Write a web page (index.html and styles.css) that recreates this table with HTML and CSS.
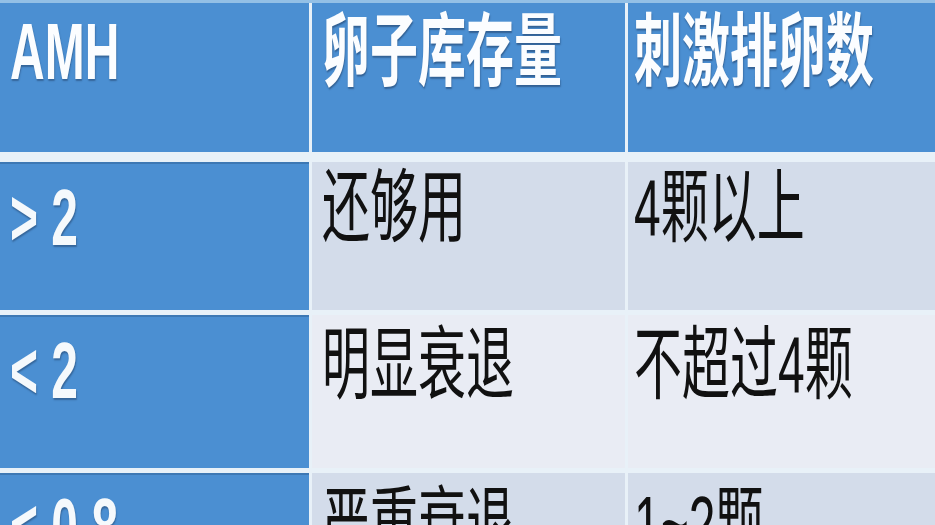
FILE: index.html
```html
<!DOCTYPE html>
<html lang="zh-CN">
<head>
<meta charset="utf-8">
<title>AMH 卵子库存量</title>
<link rel="stylesheet" href="styles.css">
</head>
<body>
<div class="table">
  <div class="row head">
    <div class="cell key"><span class="txt">AMH</span></div>
    <div class="cell"><span class="txt">卵子库存量</span></div>
    <div class="cell"><span class="txt">刺激排卵数</span></div>
  </div>
  <div class="row r1 dark">
    <div class="cell key"><span class="txt">&gt; 2</span></div>
    <div class="cell"><span class="txt">还够用</span></div>
    <div class="cell"><span class="txt">4颗以上</span></div>
  </div>
  <div class="row r2 light">
    <div class="cell key"><span class="txt">&lt; 2</span></div>
    <div class="cell"><span class="txt">明显衰退</span></div>
    <div class="cell"><span class="txt">不超过4颗</span></div>
  </div>
  <div class="row r3 dark">
    <div class="cell key"><span class="txt">&lt; 0.8</span></div>
    <div class="cell"><span class="txt">严重衰退</span></div>
    <div class="cell"><span class="txt">1~2颗</span></div>
  </div>
</div>
</body>
</html>
```

FILE: styles.css
```css
html, body {
  margin: 0;
  padding: 0;
  width: 935px;
  height: 525px;
  overflow: hidden;
  background: #e8f1f8;
}

.table {
  display: flex;
  flex-direction: column;
  width: 935px;
  height: 525px;
  border-top: 3px solid #93c0e6;
  box-sizing: border-box;
  background: #e8f1f8;
  font-family: "Liberation Sans", "Noto Sans CJK SC", sans-serif;
}

.row {
  display: grid;
  grid-template-columns: 309px 313px 1fr;
  column-gap: 3px;
  flex: none;
}

.head { height: 149px; margin-bottom: 10px; }
.r1 { height: 148px; margin-bottom: 5px; }
.r2 { height: 153px; margin-bottom: 5px; }
.r3 { flex: 1; min-height: 0; }

.cell {
  white-space: nowrap;
  overflow: hidden;
  padding: 8px 0 0 10px;
  box-sizing: border-box;
}

.cell + .cell + .cell { padding-left: 6px; }

.txt {
  display: inline-block;
  font-size: 80px;
  line-height: 80px;
  transform: scaleX(0.6);
  transform-origin: left top;
}

.head .cell {
  background: #4b8fd2;
  color: #fbfdff;
  font-weight: 700;
  text-shadow: 1px 2px 2px rgba(20, 40, 70, 0.45);
  padding-top: 9px;
}

.key {
  background: #4b8fd2;
  color: #f5f9fc;
  box-shadow: inset 0 2px 0 #3d78b4;
}

.head .key { box-shadow: none; }

.row .key .txt {
  font-weight: 700;
  text-shadow: 1px 2px 2px rgba(20, 40, 70, 0.4);
}

.dark .cell:not(.key) {
  background: #d3dcea;
  color: #111;
}

.light .cell:not(.key) {
  background: #e9ecf4;
  color: #111;
}

.dark .cell:not(.key) .txt,
.light .cell:not(.key) .txt { font-weight: 400; }

.r1 .cell { padding-top: 6px; }
.r2 .cell { padding-top: 10px; }
.r3 .cell { padding-top: 12px; }
.r1 .key, .r2 .key { padding-top: 16px; }
.r3 .key { padding-top: 14px; }
```
